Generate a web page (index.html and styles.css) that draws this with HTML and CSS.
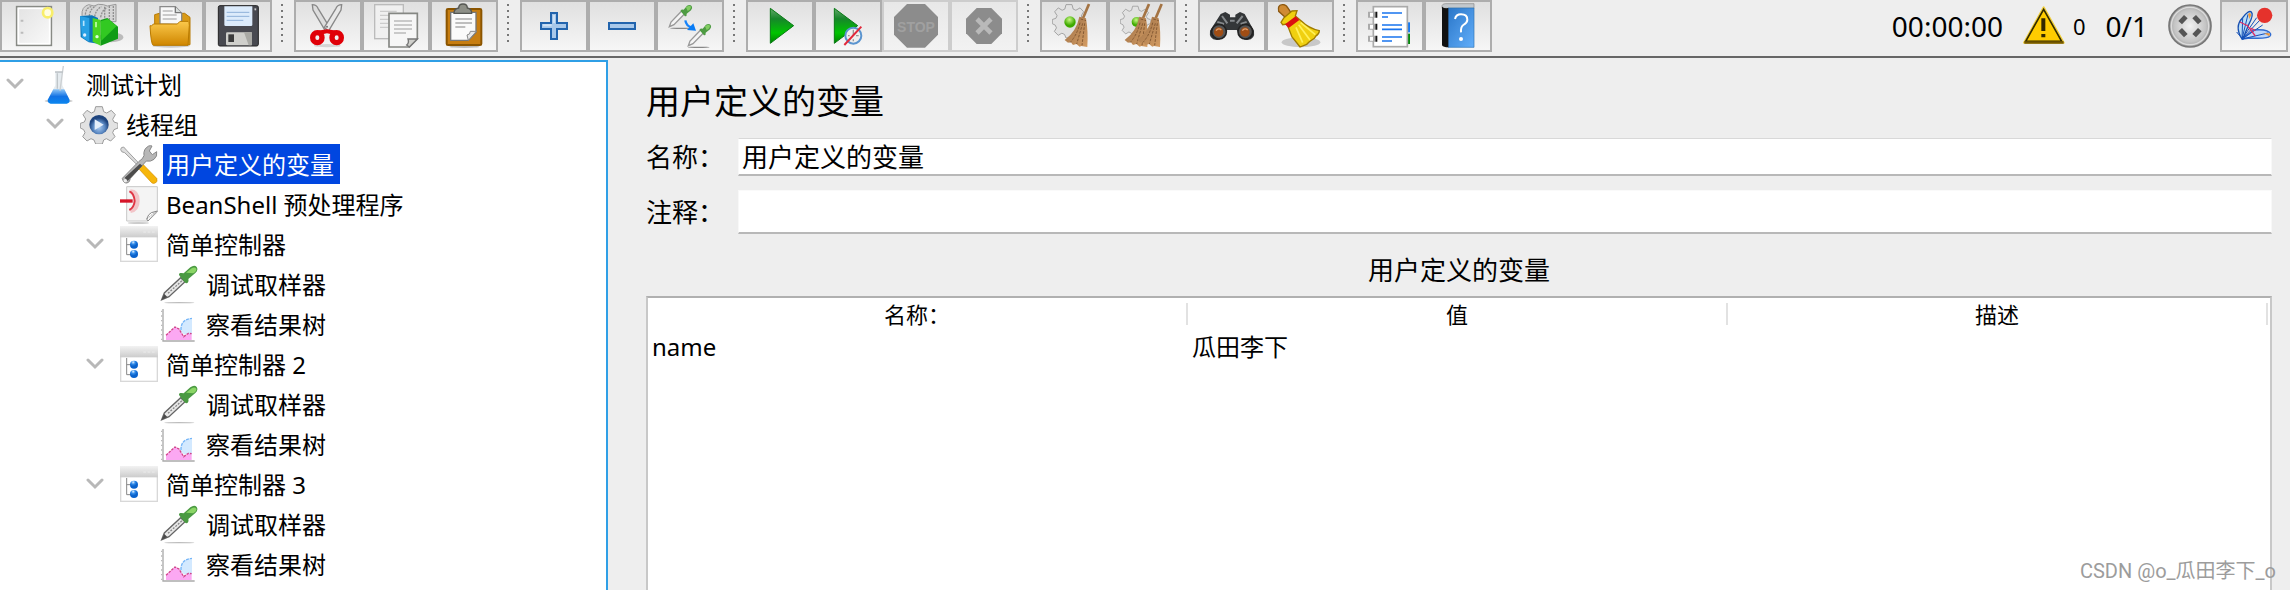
FILE: index.html
```html
<!DOCTYPE html>
<html lang="zh-CN">
<head>
<meta charset="utf-8">
<title>用户定义的变量</title>
<link rel="stylesheet" href="styles.css">
</head>
<body>
<svg class="defs" aria-hidden="true">
  <defs>
    <linearGradient id="paper" x1="0" y1="0" x2="1" y2="1"><stop offset="0" stop-color="#e2e2e2"/><stop offset="1" stop-color="#fafafa"/></linearGradient>
    <linearGradient id="orange" x1="0" y1="0" x2="0" y2="1"><stop offset="0" stop-color="#fbc94c"/><stop offset="1" stop-color="#cf8600"/></linearGradient>
    <linearGradient id="green" x1="0" y1="0" x2="0" y2="1"><stop offset="0" stop-color="#63a86b"/><stop offset=".3" stop-color="#16862a"/><stop offset=".7" stop-color="#00c400"/><stop offset="1" stop-color="#008000"/></linearGradient>
    <linearGradient id="book" x1="0" y1="0" x2="1" y2="1"><stop offset="0" stop-color="#2a76c8"/><stop offset="1" stop-color="#62aefa"/></linearGradient>
    <linearGradient id="flask" x1="0" y1="0" x2="0" y2="1"><stop offset="0" stop-color="#8cc4f6"/><stop offset=".5" stop-color="#1272e4"/><stop offset="1" stop-color="#0a86f0"/></linearGradient>
    <linearGradient id="bar" x1="0" y1="0" x2="0" y2="1"><stop offset="0" stop-color="#f2f2f2"/><stop offset="1" stop-color="#cccccc"/></linearGradient>
    <linearGradient id="brown" x1="0" y1="0" x2="1" y2="1"><stop offset="0" stop-color="#9c7048"/><stop offset="1" stop-color="#d49c62"/></linearGradient>
    <radialGradient id="disc"><stop offset="0" stop-color="#f2f2f2"/><stop offset=".75" stop-color="#c4c4c4"/><stop offset="1" stop-color="#a0a0a0"/></radialGradient>
    <radialGradient id="bead" cx=".45" cy=".3"><stop offset="0" stop-color="#c8f884"/><stop offset="1" stop-color="#3faa00"/></radialGradient>
    <radialGradient id="ball" cx=".4" cy=".2"><stop offset="0" stop-color="#e0f0ff"/><stop offset=".5" stop-color="#2f8ae8"/><stop offset="1" stop-color="#0a62cc"/></radialGradient>
    <radialGradient id="hub" cx=".5" cy=".65"><stop offset="0" stop-color="#a8c8ee"/><stop offset=".6" stop-color="#5c8ac4"/><stop offset="1" stop-color="#1e447e"/></radialGradient>

    <symbol id="chevron" viewBox="0 0 18 12"><path d="M2 2l7 7 7-7" fill="none" stroke="#b8b8b8" stroke-width="3" stroke-linecap="round"/></symbol>
    <symbol id="gear" viewBox="0 0 114 114">
      <path d="M47 2h20l4 15 9 4 14-8 12 13-8 14 4 8 12 4v14l-12 5-4 9 7 12-13 13-13-7-8 4-4 12H47l-5-12-9-4-12 7-13-13 7-12-4-9L1 66V52l12-4 4-9-8-13 12-13 13 8 9-4z" fill="#e2e2e2" stroke="#9c9c9c" stroke-width="3"/>
    </symbol>
    <symbol id="dropper" viewBox="0 0 114 120">
      <ellipse cx="58" cy="116" rx="45" ry="2" fill="#bdbdbd"/>
      <path d="M5 107l8-20 49-46 13 12-48 45z" fill="#e8e8e8" stroke="#666" stroke-width="4"/>
      <path d="M5 107l8-17 9 9z" fill="#4a4a4a"/><path d="M24 88l42-38" stroke="#888" stroke-width="4" stroke-dasharray="6 4"/>
      <path d="M59 36q-5-7 2-9 5-1 10 1l20-18q12-9 19-1 6 9-4 18L85 45q2 9-3 12-4 2-9-4z" fill="#4a9a42"/>
      <path d="M78 26l17-13q9-5 14 1 2 7-9 14z" fill="#8bd566"/>
    </symbol>
    <symbol id="controller" viewBox="0 0 114 120">
      <rect x="2" y="8" width="110" height="104" fill="#fff" stroke="#d8d8d8" stroke-width="4"/>
      <rect x="0" y="6" width="114" height="34" fill="url(#bar)"/>
      <path d="M70 24h8m5 0h8m5 0h8" stroke="#e6e6e6" stroke-width="5"/>
      <path d="M20 42v50h14M20 62h14" fill="none" stroke="#888" stroke-width="3"/>
      <circle cx="42" cy="62" r="12" fill="url(#ball)"/><circle cx="42" cy="90" r="12" fill="url(#ball)"/>
    </symbol>
    <symbol id="chart" viewBox="0 0 114 120">
      <path d="M62 82q-4-36 34-39v48H72z" fill="#d3e9ff"/><path d="M63 78q-1-32 33-35" fill="none" stroke="#76b6f8" stroke-width="4" stroke-dasharray="9 3"/>
      <path d="M18 108V94l27-25 12 6 14 23 12-9 12 2v17z" fill="#fba8f2"/><path d="M18 94l27-25 12 6 14 23 14-10 10 1" fill="none" stroke="#d2458c" stroke-width="4" stroke-dasharray="8 3"/>
      <path d="M9 15v96h95" fill="none" stroke="#aaa" stroke-width="4"/><path d="M5 20v88" stroke="#bbb" stroke-width="4" stroke-dasharray="4 10"/>
    </symbol>
    <symbol id="broom" viewBox="0 0 80 134">
      <path d="M75 2L57 45" stroke="#a47444" stroke-width="8"/>
      <path d="M46 40l20 5q7 40 4 86l-18-3-5 2-10-8-10 3-7-9-8 2-10-8q36-27 44-70z" fill="url(#brown)"/>
      <path d="M48 58q-8 36-30 60M56 60l-18 62M62 60l-8 66M50 47l16 5" fill="none" stroke="#855a33" stroke-width="3" stroke-dasharray="8 4"/>
    </symbol>
  </defs>
</svg>

<header class="toolbar">
  <div class="group">
    <button class="tool" type="button" aria-label="新建"><svg viewBox="6 6 192 144">
      <rect x="50" y="20" width="104" height="116" fill="url(#paper)" stroke="#888a85" stroke-width="5"/><rect x="55" y="25" width="94" height="106" fill="none" stroke="#fff" stroke-width="5"/><path d="M62 62h8M62 98h8" stroke="#bbb" stroke-width="6"/>
      <circle cx="143" cy="38" r="18" fill="#f8ee6a"/><circle cx="143" cy="38" r="10" fill="#fffde0"/></svg></button>
    <button class="tool" type="button" aria-label="模板"><svg viewBox="6 6 192 144">
      <ellipse cx="130" cy="112" rx="36" ry="15" fill="#bbb"/>
      <path d="M42 46q-2-26 20-32l16 4q12-8 28-4l12 4 26-5v52H60z" fill="#d5d5d5" stroke="#999" stroke-width="3"/>
      <path d="M52 44q2-22 18-24M64 48q2-22 20-30M80 50q4-22 20-30M98 52q4-22 18-28M110 20v40M124 18v44M136 18v44" fill="none" stroke="#909090" stroke-width="4" stroke-dasharray="6 3"/>
      <path d="M36 48l36-2 18 8v77l-28-4-24-16z" fill="#0d76b8"/><path d="M36 48l28 6v72l-22-14z" fill="#28a0e4"/><circle cx="50" cy="105" r="5" fill="#def"/><path d="M47 62v16" stroke="#b5e4ff" stroke-width="5"/>
      <path d="M74 54l24 6v77l-24-12z" fill="#4ad522"/><path d="M98 60l20-6 32 26v36l-52 21z" fill="#109c16"/><path d="M98 64l22-7 26 21-46 44z" fill="#32c922"/><circle cx="87" cy="110" r="5" fill="#dfd"/><path d="M84 66v16" stroke="#c5ffae" stroke-width="5"/></svg></button>
    <button class="tool" type="button" aria-label="打开"><svg viewBox="6 6 192 144">
      <ellipse cx="105" cy="137" rx="56" ry="6" fill="#c9c9c9"/><path d="M56 44l14-4h76l16 12v82H56z" fill="#d99a16" stroke="#b77a05" stroke-width="3"/>
      <path d="M72 72V20h46l19 20v34z" fill="#f8f8f8" stroke="#8a8a8a" stroke-width="4"/><path d="M118 20v18h18" fill="#d9dedc" stroke="#777" stroke-width="4"/><path d="M80 33h30M80 45h42M80 57h42" stroke="#bbb" stroke-width="4"/>
      <path d="M42 77q5 4 10-5h72l8-8h24q4 1 4 12l-4 60H52q-7-2-10-59z" fill="url(#orange)" stroke="#b97a00" stroke-width="3"/></svg></button>
    <button class="tool" type="button" aria-label="保存"><svg viewBox="6 6 192 144">
      <rect x="43" y="17" width="120" height="121" rx="5" fill="#484950" stroke="#222" stroke-width="3"/><path d="M61 19h84v56q0 3-4 3H65q-4 0-4-4z" fill="#dcebfb"/><path d="M68 37h68M68 49h68M68 61h50" stroke="#8fb0d8" stroke-width="3"/><rect x="66" y="97" width="78" height="39" rx="4" fill="#cfcfcb"/><path d="M120 97h24v39h-10z" fill="#a9a9a4"/><rect x="73" y="103" width="17" height="23" fill="#3b3b3b"/><path d="M154 25v6" stroke="#ccc" stroke-width="5"/></svg></button>
  </div>
  <i class="dots"></i>
  <div class="group">
    <button class="tool" type="button" aria-label="剪切"><svg viewBox="6 6 192 144">
      <ellipse cx="100" cy="137" rx="40" ry="5" fill="#d5d5d5"/><path d="M55 14q12 0 17 11l35 57-12 12L57 30z" fill="#ddd" stroke="#888" stroke-width="4"/><path d="M143 14q-12 0-17 11L91 82l12 12 38-64z" fill="#e8e8e8" stroke="#888" stroke-width="4"/>
      <ellipse cx="70" cy="113" rx="14" ry="15" fill="none" stroke="#e00008" stroke-width="16"/><ellipse cx="128" cy="113" rx="14" ry="15" fill="none" stroke="#e00008" stroke-width="16"/><path d="M70 92l29-4 30 4-2 14-28-6-28 6z" fill="#e00008"/><circle cx="99" cy="80" r="3" fill="#777"/></svg></button>
    <button class="tool" type="button" aria-label="复制"><svg viewBox="6 6 192 144">
      <rect x="38" y="14" width="86" height="102" fill="#f0f0f0" stroke="#bbb" stroke-width="4"/><path d="M54 34h50M54 46h40M54 58h30M54 70h25M54 82h25" stroke="#ccc" stroke-width="4"/>
      <path d="M81 40h85v77l-24 24H81z" fill="#f6f6f6" stroke="#858783" stroke-width="5"/><path d="M142 141l-8-6q8-6 4-18h28z" fill="#d0d0cc" stroke="#777" stroke-width="4"/><path d="M96 63h54M96 75h54M96 87h54M96 99h36" stroke="#bbb" stroke-width="4"/></svg></button>
    <button class="tool" type="button" aria-label="粘贴"><svg viewBox="6 6 192 144">
      <ellipse cx="103" cy="140" rx="45" ry="4" fill="#bbb"/><rect x="50" y="27" width="104" height="108" rx="4" fill="#c77d10" stroke="#8b5500" stroke-width="6"/><path d="M62 37h76v60l-23 24H62z" fill="#fafafa" stroke="#777" stroke-width="4"/><path d="M115 121l-4-16q10-1 10-11h18z" fill="#e8e8e8" stroke="#888" stroke-width="3"/><path d="M76 57h50M76 69h50M76 81h30" stroke="#aaa" stroke-width="4"/>
      <path d="M72 40q0-14 14-16 0-12 13-12t13 12q13 2 13 16z" fill="#8d8f87" stroke="#555753" stroke-width="4"/></svg></button>
  </div>
  <i class="dots"></i>
  <div class="group">
    <button class="tool" type="button" aria-label="展开"><svg viewBox="6 6 192 144"><path d="M93 39h18v30h30v18h-30v30H93V87H63V69h30z" fill="#a8c8ea" stroke="#2264ad" stroke-width="6"/><path d="M102 45v24M69 76h26" stroke="#cfe2f5" stroke-width="6"/></svg></button>
    <button class="tool" type="button" aria-label="折叠"><svg viewBox="6 6 192 144"><path d="M63 69h78v18H63z" fill="#a8c8ea" stroke="#2264ad" stroke-width="6"/></svg></button>
    <button class="tool" type="button" aria-label="切换"><svg viewBox="6 6 192 144">
      <ellipse cx="75" cy="85" rx="33" ry="2" fill="#888"/><ellipse cx="128" cy="142" rx="33" ry="2" fill="#888"/>
      <g id="pip"><path d="M40 80l5-14 32-33 9 8-32 33z" fill="#f5f5f5" stroke="#999" stroke-width="4"/><path d="M74 34q-2-7 9-5l10-12q9-4 14 1 4 6-2 13L92 41q1 9-5 8z" fill="#4e9b42"/><path d="M90 22q10-8 15-2 0 8-10 13z" fill="#82cd62"/></g><use href="#pip" x="57" y="57"/>
      <path d="M88 61q3 17 18 21" fill="none" stroke="#1684fb" stroke-width="7"/><path d="M112 70l8 22-27-2z" fill="#087bf5"/></svg></button>
  </div>
  <i class="dots"></i>
  <div class="group">
    <button class="tool" type="button" aria-label="启动"><svg viewBox="6 6 192 144"><path d="M73 25v105l70-53z" fill="url(#green)" stroke="#087a14" stroke-width="3"/></svg></button>
    <button class="tool" type="button" aria-label="不停顿开始"><svg viewBox="6 6 192 144"><path d="M61 25v105l70-53z" fill="url(#green)" stroke="#087a14" stroke-width="3"/><circle cx="118" cy="107" r="24" fill="#eee" stroke="#5a94cf" stroke-width="6"/><path d="M118 89v18M134 107h-8M118 124v-6M102 107h5" stroke="#999" stroke-width="4"/><path d="M91 135l51-55" stroke="#e2283a" stroke-width="6"/></svg></button>
    <button class="tool" type="button" aria-label="停止" disabled><svg viewBox="6 6 192 144"><path d="M75 12h54l39 39v53l-39 39H75l-39-39V51z" fill="#8c8c8c"/><text class="stop" x="102" y="95">STOP</text></svg></button>
    <button class="tool" type="button" aria-label="关闭" disabled><svg viewBox="6 6 192 144"><path d="M80 24h44l32 32v44l-32 32H80l-32-32V56z" fill="#8c8c8c"/><path d="M86 62l32 32M118 62l-32 32" stroke="#b9b9b9" stroke-width="14" stroke-linecap="square"/></svg></button>
  </div>
  <i class="dots"></i>
  <div class="group">
    <button class="tool" type="button" aria-label="清除"><svg viewBox="6 6 192 144"><use href="#gear" x="36" y="12" width="102" height="102"/><circle cx="90" cy="66" r="17" fill="url(#bead)"/><use href="#broom" x="72" y="10" width="80" height="134"/></svg></button>
    <button class="tool" type="button" aria-label="清除全部"><svg viewBox="6 6 192 144"><use href="#gear" x="36" y="12" width="92" height="102"/><circle cx="86" cy="66" r="15" fill="url(#bead)"/><use href="#broom" x="48" y="10" width="80" height="134"/><use href="#broom" x="86" y="10" width="80" height="134"/></svg></button>
  </div>
  <i class="dots"></i>
  <div class="group">
    <button class="tool" type="button" aria-label="搜索"><svg viewBox="6 6 192 144">
      <path d="M68 42l14-6 14 8v8h16v-8l14-8 14 6 28 50q4 26-20 28-16 2-24-20l-8-10H88l-8 10q-8 22-24 20-24-2-20-28z" fill="#333638"/><path d="M72 48l16 22M134 48l-18 22M58 66l20 6M146 66l-18 6M96 62h14" stroke="#85898c" stroke-width="6"/><circle cx="63" cy="95" r="22" fill="#555" stroke="#222" stroke-width="5"/><circle cx="142" cy="95" r="22" fill="#555" stroke="#222" stroke-width="5"/><circle cx="62" cy="96" r="14" fill="#a04d14"/><circle cx="141" cy="96" r="14" fill="#a04d14"/><path d="M54 92q8-10 16-2M133 92q8-10 16-2" fill="none" stroke="#e0a070" stroke-width="4"/></svg></button>
    <button class="tool" type="button" aria-label="重置搜索"><svg viewBox="6 6 192 144">
      <ellipse cx="105" cy="127" rx="58" ry="15" fill="#c8c8c8"/><path d="M38 34q-4-18 10-20 12-2 17 9l12 18-18 12z" fill="#cf8b34" stroke="#8c5810" stroke-width="4"/><path d="M45 67l9-14 24-20 15-1-5 16 18 15q22 22 54 29 0 9-11 17l-4 6-15 10-8 8-20 8-14-18-10-12-15-39-13 2z" fill="#f0d010" stroke="#a07c00" stroke-width="4"/><path d="M90 82l20 46M98 74l34 46M104 68l44 36" stroke="#fff05a" stroke-width="5"/><path d="M57 73l32-24 11 11-32 24z" fill="#dc1010"/></svg></button>
  </div>
  <i class="dots"></i>
  <div class="group">
    <button class="tool" type="button" aria-label="函数助手"><svg viewBox="6 6 192 144">
      <path d="M153 67h9v30h-9z" fill="#167af2"/><path d="M153 101h9v31h-9z" fill="#058a0c"/><rect x="52" y="20" width="102" height="120" fill="#fff" stroke="#aaa" stroke-width="5"/>
      <path d="M36 44h21M36 80h21M36 116h21" stroke="#aaa" stroke-width="18"/><path d="M42 44h9M42 80h9M42 116h9" stroke="#fff" stroke-width="12"/><path d="M61 35v18M61 71v18M61 107v18" stroke="#151515" stroke-width="6"/><path d="M78 39h60M78 51h18M78 75h60M78 88h60M78 111h60M78 123h30" stroke="#1974ee" stroke-width="5"/></svg></button>
    <button class="tool" type="button" aria-label="帮助"><svg viewBox="6 6 192 144">
      <path d="M54 17q2-6 10-6h86v14H54z" fill="#c3c8cc" stroke="#888" stroke-width="2"/><path d="M72 24h78v118H72z" fill="url(#book)" stroke="#2e72b4" stroke-width="2"/><path d="M54 20q7 6 19 4v118q-15 0-19-6z" fill="#111"/><path d="M93 57q3-14 18-14 19 0 19 16 0 9-12 16-8 5-7 22" fill="none" stroke="#fff" stroke-width="6"/><circle cx="111" cy="117" r="6" fill="#fff"/></svg></button>
  </div>
  <div class="status">
    <time class="clock">00:00:00</time>
    <svg class="warn" viewBox="0 0 132 132"><path d="M68 10L9 116h119z" fill="#ffd000" stroke="#f1cf3c" stroke-width="6" stroke-linejoin="round"/><path d="M68 16L14 112h108z" fill="#ffcc00" stroke="#342c00" stroke-width="5"/><path d="M10 112h118v7H10z" fill="#745800"/><path d="M67 43v38M67 90v10" stroke="#332900" stroke-width="12"/></svg>
    <span class="errors">0</span>
    <span class="threads">0/1</span>
    <svg class="state" viewBox="0 0 132 132"><circle cx="66" cy="66" r="63" fill="url(#disc)" stroke="#777" stroke-width="5"/><circle cx="66" cy="66" r="56" fill="none" stroke="#dcdcdc" stroke-width="4"/><path d="M31 51l17-18 11 10-17 18zM101 51L84 33 73 43l17 18zM31 82l17 18 11-10-17-18zM101 82l-17 18-11-10 17-18z" fill="#555"/></svg>
    <button class="tool" type="button" aria-label="录制"><svg viewBox="6 6 192 144">
      <path d="M66 117q-24-38 2-64 18-24 26-17 8 8-8 38L72 108z" fill="#b9dcf5" stroke="#154eb0" stroke-width="4"/><path d="M66 117q14-10 34-27 46-4 52 12 4 16-62 12z" fill="#bcd6fa" stroke="#2f6bd0" stroke-width="4"/><path d="M66 117l18-74M66 117l2-62M66 117l54-57M66 117l62-42M66 117l44-64M50 96l20 24M66 117l78-18" fill="none" stroke="#1551b8" stroke-width="3"/><path d="M84 42l6-4 4 7-6 12zM132 100l18 0-2 9z" fill="#f29a3c"/><path d="M60 66l24 12M80 74l26 34M92 84l14 8" stroke="#da3068" stroke-width="4"/><circle cx="134" cy="46" r="23" fill="#e5322c"/></svg></button>
  </div>
</header>

<main class="workspace">
  <nav class="tree" aria-label="测试计划">
    <div class="node level-0"><svg class="arrow"><use href="#chevron"/></svg><svg class="icon" viewBox="0 0 114 120"><ellipse cx="56" cy="111" rx="42" ry="4" fill="#bbb"/><path d="M46 24h21v40l21 42q4 11-8 13H32q-12-3-8-13l22-42z" fill="#e5ebef"/><path d="M40 76h33l15 30q4 11-8 13H32q-12-3-8-13z" fill="url(#flask)"/><path d="M52 28v46" stroke="#c0c6ca" stroke-width="4"/><path d="M70 6L60 80" stroke="#ccd0d2" stroke-width="4"/><path d="M45 24h23" stroke="#b4babf" stroke-width="4"/></svg><span class="label">测试计划</span></div>
    <div class="node level-1"><svg class="arrow"><use href="#chevron"/></svg><svg class="icon" viewBox="0 0 114 120"><use href="#gear" x="0" y="6" width="114" height="114"/><circle cx="57" cy="62" r="29" fill="url(#hub)"/><path d="M44 46l27 16-27 16z" fill="#e4eefa"/></svg><span class="label">线程组</span></div>
    <div class="node level-2"><i class="arrow"></i><svg class="icon" viewBox="0 0 114 120"><path d="M2 17q0-8 9-8l9 10 36 38-5 5-37-36q-11-1-12-9z" fill="#ddd" stroke="#a0a0a0" stroke-width="3"/><path d="M68 60l42 43q4 10-4 14-7 3-11-1L55 73z" fill="#f6b60c" stroke="#d28c00" stroke-width="2"/><path d="M7 103l49-50q13-8 16-18-3-20 14-29 6-2 10 0l-8 15 9 11 13-9q3 14-8 23-10 8-23 5L31 103q-1 12-10 14-11 1-14-14z" fill="#b7b7b7" stroke="#888" stroke-width="3"/><path d="M14 101l46-42 7 6-44 46z" fill="#4b4b4b"/><circle cx="16" cy="110" r="5" fill="#eee"/></svg><span class="label selected">用户定义的变量</span></div>
    <div class="node level-2"><i class="arrow"></i><svg class="icon" viewBox="0 0 114 120"><ellipse cx="55" cy="117" rx="32" ry="3" fill="#ccc"/><path d="M20 8h92v76l-28 27H20z" fill="#f4f4f4" stroke="#c8c8c8" stroke-width="3"/><path d="M84 111l-4-6q5-15 14-19l18-5z" fill="#fff" stroke="#888" stroke-width="3"/><path d="M82 104l25-22" stroke="#888" stroke-width="3" stroke-dasharray="4 4"/><path d="M31 23q21 1 21 27 0 26-21 30" fill="none" stroke="#f2c4c8" stroke-width="14"/><path d="M28 22q14 5 16 29-2 20-16 27" fill="none" stroke="#df3544" stroke-width="6"/><path d="M0 51h38" stroke="#d61428" stroke-width="10"/></svg><span class="label">BeanShell 预处理程序</span></div>
    <div class="node level-2"><svg class="arrow"><use href="#chevron"/></svg><svg class="icon"><use href="#controller"/></svg><span class="label">简单控制器</span></div>
    <div class="node level-3"><i class="arrow"></i><svg class="icon"><use href="#dropper"/></svg><span class="label">调试取样器</span></div>
    <div class="node level-3"><i class="arrow"></i><svg class="icon"><use href="#chart"/></svg><span class="label">察看结果树</span></div>
    <div class="node level-2"><svg class="arrow"><use href="#chevron"/></svg><svg class="icon"><use href="#controller"/></svg><span class="label">简单控制器 2</span></div>
    <div class="node level-3"><i class="arrow"></i><svg class="icon"><use href="#dropper"/></svg><span class="label">调试取样器</span></div>
    <div class="node level-3"><i class="arrow"></i><svg class="icon"><use href="#chart"/></svg><span class="label">察看结果树</span></div>
    <div class="node level-2"><svg class="arrow"><use href="#chevron"/></svg><svg class="icon"><use href="#controller"/></svg><span class="label">简单控制器 3</span></div>
    <div class="node level-3"><i class="arrow"></i><svg class="icon"><use href="#dropper"/></svg><span class="label">调试取样器</span></div>
    <div class="node level-3"><i class="arrow"></i><svg class="icon"><use href="#chart"/></svg><span class="label">察看结果树</span></div>
  </nav>

  <section class="editor">
    <h1 class="title">用户定义的变量</h1>
    <form class="fields">
      <label for="name">名称：</label>
      <input class="field" id="name" type="text" value="用户定义的变量">
      <label for="comment">注释：</label>
      <input class="field comment" id="comment" type="text">
    </form>
    <h2 class="subtitle" id="vars">用户定义的变量</h2>
    <div class="grid">
      <table class="vars" aria-labelledby="vars">
        <thead><tr><th><span>名称：</span></th><th><span>值</span></th><th><span>描述</span></th></tr></thead>
        <tbody><tr><td>name</td><td>瓜田李下</td><td></td></tr></tbody>
      </table>
    </div>
  </section>
</main>
<div class="watermark">CSDN @o_瓜田李下_o</div>
</body>
</html>
```
FILE: styles.css
```css
* {
  box-sizing: border-box;
}

body {
  display: flex;
  flex-direction: column;
  height: 100vh;
  margin: 0;
  overflow: hidden;
  background: #eeeeee;
  color: #000;
  font-family: "Noto Sans", "Noto Sans CJK SC", sans-serif;
  font-size: 24px;
}

.defs {
  position: absolute;
  width: 0;
  height: 0;
}

.toolbar {
  display: flex;
  flex: none;
  align-items: flex-start;
  height: 58px;
  border-bottom: 2px solid #666;
}

.group {
  display: flex;
  flex: none;
}

.tool {
  display: block;
  flex: none;
  width: 68px;
  height: 52px;
  padding: 0;
  border: 2px solid #adadad;
  background: linear-gradient(#e0e0e0, #f6f6f6);
}

.tool:disabled {
  border-color: #cdcdcd;
  background: linear-gradient(#e8e8e8, #f2f2f2);
}

.tool svg {
  display: block;
  width: 64px;
  height: 48px;
}

.stop {
  font: bold 42px "Liberation Sans", sans-serif;
  text-anchor: middle;
  fill: #a0a0a0;
}

.dots {
  flex: none;
  width: 2px;
  height: 38px;
  margin: 4px 11px 0 9px;
  background: repeating-linear-gradient(#777 0 2px, transparent 2px 6px);
}

.status {
  display: flex;
  align-items: center;
  height: 52px;
  margin-left: auto;
  padding-right: 2px;
}

.clock,
.threads {
  font-size: 28px;
  line-height: 36px;
}

.warn,
.state {
  width: 44px;
  height: 44px;
}

.warn {
  margin: 0 8px 0 18px;
}

.errors {
  font-size: 22px;
  line-height: 32px;
}

.threads {
  margin: 0 20px;
}

.state {
  margin-right: 8px;
}

.workspace {
  display: flex;
  flex: 1;
  min-height: 0;
  padding-top: 2px;
}

.tree {
  flex: none;
  width: 608px;
  padding-top: 2px;
  border: solid #2f9fe6;
  border-width: 2px 2px 0 0;
  background: #fff;
}

.node {
  display: flex;
  align-items: center;
  height: 40px;
}

.level-1 {
  padding-left: 40px;
}

.level-2 {
  padding-left: 80px;
}

.level-3 {
  padding-left: 120px;
}

.arrow {
  flex: none;
  width: 18px;
  height: 12px;
  margin: 0 16px 0 6px;
}

.icon {
  flex: none;
  width: 38px;
  height: 40px;
  margin-right: 5px;
}

.label {
  padding: 2px 6px 0 3px;
  line-height: 38px;
  white-space: nowrap;
}

.selected {
  background: #0046e0;
  color: #fff;
}

.editor {
  display: flex;
  flex: 1;
  flex-direction: column;
  min-width: 0;
  padding: 18px 18px 0 38px;
}

.title {
  margin: 0 0 14px;
  font-size: 34px;
  font-weight: 400;
  line-height: 46px;
}

.fields {
  display: grid;
  grid-template-columns: 92px 1fr;
  align-items: center;
  row-gap: 14px;
  font-size: 26px;
  line-height: 36px;
}

.field {
  width: 100%;
  height: 38px;
  padding: 0 3px 2px;
  border: 1px solid #f8f8f8;
  border-top-color: #d8d8d8;
  border-bottom: 2px solid #b8b8b8;
  background: #fff;
  color: #000;
  font: inherit;
}

.comment {
  height: 44px;
  border-top-color: #fafafa;
}

.subtitle {
  margin: 18px 0 8px;
  font-size: 26px;
  font-weight: 400;
  line-height: 36px;
  text-align: center;
}

.grid {
  flex: 1;
  padding-right: 2px;
  border: 2px solid #c8c8c8;
  border-top-color: #b0b0b0;
  border-bottom: 0;
  background: #fff;
}

.vars {
  width: 100%;
  border-collapse: collapse;
  table-layout: fixed;
}

.vars th {
  padding: 5px 0;
  font-size: 22px;
  font-weight: 400;
  line-height: 22px;
}

.vars th span {
  display: block;
  border-right: 2px solid #e2e2e2;
}

.vars td {
  padding: 0 4px;
  line-height: 34px;
}

.watermark {
  position: absolute;
  right: 14px;
  bottom: 6px;
  color: #9c9c9c;
  font: 20px/26px Roboto, "Noto Sans CJK SC", sans-serif;
}
```
